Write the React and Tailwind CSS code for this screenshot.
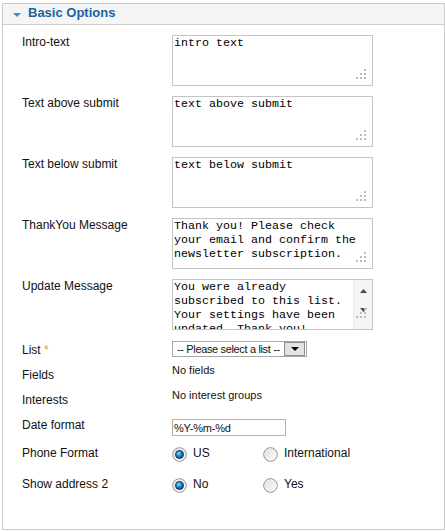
import React from "react";

const MONO = "font-['Liberation_Mono','Courier_New',monospace]";

function Grip({ className }) {
  return (
    <svg
      width="10"
      height="10"
      viewBox="0 0 10 10"
      className={"pointer-events-none absolute " + className}
    >
      <g fill="#bdbdbd">
        <rect x="8" y="0" width="2" height="2" />
        <rect x="4" y="4" width="2" height="2" />
        <rect x="8" y="4" width="2" height="2" />
        <rect x="0" y="8" width="2" height="2" />
        <rect x="4" y="8" width="2" height="2" />
        <rect x="8" y="8" width="2" height="2" />
      </g>
    </svg>
  );
}

function Area({ text, scroll }) {
  return (
    <div className="relative flex h-[51px] w-[201px] border border-[#c4c4c4] bg-white">
      <textarea
        readOnly
        value={text}
        className={
          "h-full min-w-0 flex-1 resize-none overflow-hidden bg-white pl-[1px] pt-0 text-[11.67px] leading-[14px] text-black outline-none " +
          MONO
        }
      />
      {scroll ? (
        <div className="flex h-full w-[19px] flex-col items-center border-l border-[#ececec] bg-[#f4f4f4]">
          <svg width="7" height="4" viewBox="0 0 7 4" className="mt-[9px]">
            <path d="M3.5 0 L7 4 L0 4 Z" fill="#4a4a4a" />
          </svg>
          <svg width="7" height="4" viewBox="0 0 7 4" className="mt-[15px]">
            <path d="M0 0 L7 0 L3.5 4 Z" fill="#4a4a4a" />
          </svg>
        </div>
      ) : null}
      <Grip className={scroll ? "bottom-[11px] right-[6px]" : "bottom-[6px] right-[6px]"} />
    </div>
  );
}

function Radio({ checked }) {
  return (
    <svg width="15" height="15" viewBox="0 0 15 15" className="mt-[1px] shrink-0">
      <defs>
        <linearGradient id="ringfill" x1="0" y1="0" x2="1" y2="1">
          <stop offset="0" stopColor="#dcdcdc" />
          <stop offset="1" stopColor="#ffffff" />
        </linearGradient>
        <radialGradient id="bluedot" cx="0.4" cy="0.35" r="0.65">
          <stop offset="0" stopColor="#9fdcff" />
          <stop offset="0.45" stopColor="#2390d6" />
          <stop offset="1" stopColor="#0b4c7e" />
        </radialGradient>
      </defs>
      <circle cx="7.5" cy="7.5" r="6.8" fill="url(#ringfill)" stroke="#8c8c8c" strokeWidth="1" />
      <circle cx="7.5" cy="7.5" r="5.6" fill="none" stroke="#f4f4f4" strokeWidth="0.8" />
      {checked ? (
        <circle cx="7.5" cy="7.5" r="4" fill="url(#bluedot)" stroke="#1b3550" strokeWidth="1" />
      ) : null}
    </svg>
  );
}

function RadioGroup({ a, b }) {
  return (
    <div className="flex items-start text-[12px] leading-[14px] text-[#111]">
      <div className="flex w-[91px] items-start gap-[6px]">
        <Radio checked />
        <span>{a}</span>
      </div>
      <div className="flex items-start gap-[6px]">
        <Radio />
        <span>{b}</span>
      </div>
    </div>
  );
}

function Row({ label, h, labelPt, children }) {
  return (
    <div className={"flex items-start " + h}>
      <div className={"w-[150px] shrink-0 text-[12px] leading-[14px] text-[#111] " + labelPt}>
        {label}
      </div>
      <div className="flex-1">{children}</div>
    </div>
  );
}

export default function App() {
  return (
    <div className="h-[531px] w-[445px] overflow-hidden bg-white pl-[2px] pt-[3px] font-['Liberation_Sans',Arial,sans-serif]">
      <div className="flex h-[527px] w-[443px] flex-col border border-[#cccccc] bg-white">
        <div className="flex h-[21px] items-start border-b border-[#cccccc] bg-[#f5f5f5] pl-[10px]">
          <svg width="8" height="4" viewBox="0 0 8 4" className="mt-[9px]">
            <path d="M0 0 L8 0 L4 4 Z" fill="#3b8fcb" />
          </svg>
          <span className="ml-[7px] text-[13px] font-bold leading-[18px] text-[#1a63a3]">
            Basic Options
          </span>
        </div>

        <div className="flex flex-col pl-[19px] pt-[10px]">
          <Row label="Intro-text" h="h-[61px]" labelPt="pt-0">
            <Area text="intro text" />
          </Row>
          <Row label="Text above submit" h="h-[61px]" labelPt="pt-0">
            <Area text="text above submit" />
          </Row>
          <Row label="Text below submit" h="h-[61px]" labelPt="pt-0">
            <Area text="text below submit" />
          </Row>
          <Row label="ThankYou Message" h="h-[61px]" labelPt="pt-0">
            <Area
              text={"Thank you! Please check\nyour email and confirm the\nnewsletter subscription."}
            />
          </Row>
          <Row label="Update Message" h="h-[61px]" labelPt="pt-0">
            <Area
              scroll
              text={
                "You were already\nsubscribed to this list.\nYour settings have been\nupdated. Thank you!"
              }
            />
          </Row>

          <Row
            label={
              <span>
                List <span className="text-[#f39a1e]">*</span>
              </span>
            }
            h="h-[24px]"
            labelPt="pt-[3px]"
          >
            <div className="mt-[1px] flex h-[16px] w-[135px] items-center border border-[#a9a9a9] bg-white">
              <span className="flex-1 pl-[4px] text-[11px] leading-[14px] tracking-[-0.35px] text-[#111]">
                -- Please select a list --
              </span>
              <div className="mr-[1px] flex h-[14px] w-[21px] items-center justify-center border border-[#8e8e8e] bg-[#e2e2e2]">
                <svg width="8" height="4" viewBox="0 0 8 4">
                  <path d="M0 0 L8 0 L4 4 Z" fill="#000" />
                </svg>
              </div>
            </div>
          </Row>

          <Row label="Fields" h="h-[25px]" labelPt="pt-[4px]">
            <div className="text-[11px] leading-[13px] text-[#111]">No fields</div>
          </Row>
          <Row label="Interests" h="h-[29px]" labelPt="pt-[4px]">
            <div className="text-[11px] leading-[13px] text-[#111]">No interest groups</div>
          </Row>
          <Row label="Date format" h="h-[28px]" labelPt="pt-0">
            <input
              readOnly
              value="%Y-%m-%d"
              className="mt-[1px] block h-[17px] w-[114px] border border-[#b0b0b0] bg-white pl-[1px] text-[11px] leading-[13px] tracking-[-0.2px] text-[#111] outline-none"
            />
          </Row>
          <Row label="Phone Format" h="h-[31px]" labelPt="pt-0">
            <RadioGroup a="US" b="International" />
          </Row>
          <Row label="Show address 2" h="h-[31px]" labelPt="pt-0">
            <RadioGroup a="No" b="Yes" />
          </Row>
        </div>
      </div>
    </div>
  );
}
